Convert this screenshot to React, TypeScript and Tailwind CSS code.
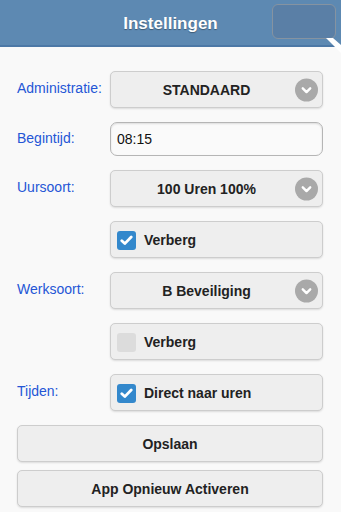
import { useState } from "react";

const btn =
  "flex h-[37px] items-center rounded-[5px] border border-[#cdcdcd] bg-[#eeeeee] pt-[1px] shadow-[0_1px_2px_rgba(0,0,0,0.12)] text-[14px] font-bold text-[#222]";

function Chevron() {
  return (
    <span className="absolute right-[4px] top-1/2 flex h-[23px] w-[23px] -translate-y-1/2 items-center justify-center rounded-full bg-[#a9a9a9]">
      <svg width="13" height="13" viewBox="0 0 14 14">
        <path
          d="M3 5.2 L7 9.2 L11 5.2"
          fill="none"
          stroke="white"
          strokeWidth="2.6"
          strokeLinecap="round"
          strokeLinejoin="round"
        />
      </svg>
    </span>
  );
}

function Select({ value }: { value: string }) {
  return (
    <div className={`${btn} relative justify-center pr-[20px]`}>
      <span>{value}</span>
      <Chevron />
    </div>
  );
}

function Check({ label, on }: { label: string; on: boolean }) {
  return (
    <div className={`${btn} gap-[8px] px-[6px]`}>
      {on ? (
        <span className="flex h-[19px] w-[19px] items-center justify-center rounded-[3px] bg-[#3388cc]">
          <svg width="13" height="11" viewBox="0 0 13 11">
            <path
              d="M1.8 5.8 L4.8 8.6 L11.2 2"
              fill="none"
              stroke="white"
              strokeWidth="2.8"
              strokeLinecap="round"
              strokeLinejoin="round"
            />
          </svg>
        </span>
      ) : (
        <span className="h-[19px] w-[19px] rounded-[3px] bg-[#dcdcdc]" />
      )}
      <span>{label}</span>
    </div>
  );
}

function Row({ label, children }: { label?: string; children: React.ReactNode }) {
  return (
    <div className="grid grid-cols-[93px_1fr] items-center">
      <span className="-mt-[2px] text-[14px] text-[#2456d6]">{label}</span>
      {children}
    </div>
  );
}

export default function App() {
  const [time] = useState("08:15");
  return (
    <div className="min-h-[512px] w-[341px] overflow-hidden bg-[#f9f9f9] font-['Liberation_Sans',Arial,sans-serif]">
      <header className="relative flex h-[47px] items-center justify-center border-b-2 border-[#4c78a6] bg-[#5d89b2] pt-[3px]">
        <h1 className="text-[17px] font-bold text-white [text-shadow:0_1px_1px_rgba(0,0,0,0.35)]">
          Instellingen
        </h1>
        <div className="absolute right-[5px] top-[4px] h-[35px] w-[64px] rounded-[6px] border border-[#8593a1] bg-[#5a7fa6]" />
        <svg
          className="absolute right-0 top-[37px]"
          width="15"
          height="16"
          viewBox="0 0 15 16"
        >
          <polygon points="0,1 7,1 15,8 15,16" fill="white" />
        </svg>
      </header>

      <main className="flex flex-col px-[17px] pt-[24px]">
        <div className="flex flex-col gap-[14px] pr-[1px]">
          <Row label="Administratie:">
            <Select value="STANDAARD" />
          </Row>
          <Row label="Begintijd:">
            <div className="flex h-[34px] items-center rounded-[7px] border border-[#b5b5b5] bg-[#fafafa] px-[6px] text-[14px] text-[#111] shadow-[inset_0_1px_2px_rgba(0,0,0,0.12)]">
              {time}
            </div>
          </Row>
          <Row label="Uursoort:">
            <Select value="100 Uren 100%" />
          </Row>
          <Row>
            <Check label="Verberg" on />
          </Row>
          <Row label="Werksoort:">
            <Select value="B Beveiliging" />
          </Row>
          <Row>
            <Check label="Verberg" on={false} />
          </Row>
          <Row label="Tijden:">
            <Check label="Direct naar uren" on />
          </Row>
        </div>
        <div className="mt-[14px] flex flex-col gap-[8px] pr-[1px]">
          <button className={`${btn} w-full justify-center`}>Opslaan</button>
          <button className={`${btn} w-full justify-center`}>
            App Opnieuw Activeren
          </button>
        </div>
      </main>
    </div>
  );
}
